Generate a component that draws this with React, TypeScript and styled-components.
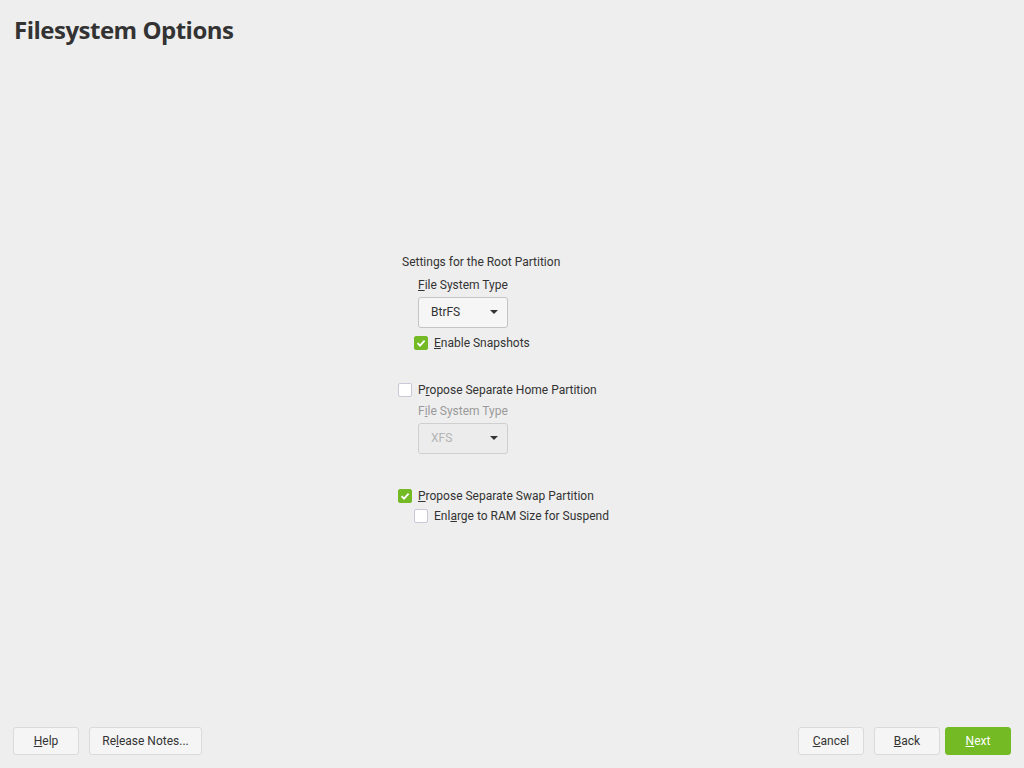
import styled, { createGlobalStyle } from "styled-components";

const GlobalStyle = createGlobalStyle`
  html, body {
    margin: 0;
    padding: 0;
    background: #eeeeee;
  }
  body {
    font-family: Roboto, "Liberation Sans", sans-serif;
    font-size: 12px;
    color: #333333;
  }
`

const Page = styled.div`
  width: 1024px;
  height: 768px;
  display: flex;
  flex-direction: column;
  background: #eeeeee;
  overflow: hidden;
`

const Header = styled.header`
  height: 52px;
  padding: 14px 0 0 14px;
  box-sizing: border-box;
`

const Title = styled.h1`
  margin: 0;
  font-family: "Open Sans", "DejaVu Sans", sans-serif;
  font-weight: 700;
  font-size: 24px;
  line-height: 32px;
  letter-spacing: -0.5px;
  color: #333333;
`

const Main = styled.main`
  flex: 1;
  display: flex;
  align-items: center;
  justify-content: center;
`

const Form = styled.div`
  width: 228px;
  display: flex;
  flex-direction: column;
`

const FrameTitle = styled.div`
  line-height: 16px;
  padding-left: 4px;
`

const Indent = styled.div<{ $top?: number }>`
  display: flex;
  flex-direction: column;
  align-items: flex-start;
  padding-left: 20px;
  margin-top: ${(p) => p.$top ?? 0}px;
`

const FieldLabel = styled.div<{ $disabled?: boolean; $top?: number }>`
  line-height: 16px;
  margin-top: ${(p) => p.$top ?? 0}px;
  color: ${(p) => (p.$disabled ? "#9a9a9a" : "#333333")};
`

const Combo = styled.div<{ $disabled?: boolean }>`
  width: 90px;
  height: 31px;
  margin-top: 4px;
  box-sizing: border-box;
  border: 1px solid ${(p) => (p.$disabled ? "#cfcfcf" : "#c4c4c4")};
  border-radius: 3px;
  background: ${(p) => (p.$disabled ? "#ececec" : "#f6f6f6")};
  display: flex;
  align-items: center;
  justify-content: space-between;
  padding: 0 9px 0 12px;
  color: ${(p) => (p.$disabled ? "#b4b4b4" : "#333333")};
`

const Caret = styled.span`
  width: 0;
  height: 0;
  border-left: 4px solid transparent;
  border-right: 4px solid transparent;
  border-top: 4px solid #333333;
`

const CheckRow = styled.div<{ $top?: number; $sub?: boolean }>`
  display: flex;
  align-items: center;
  height: 20px;
  gap: 6px;
  margin-top: ${(p) => p.$top ?? 0}px;
  margin-left: ${(p) => (p.$sub ? -4 : 0)}px;
`

const Box = styled.span<{ $checked?: boolean }>`
  width: 14px;
  height: 14px;
  box-sizing: border-box;
  border-radius: 2px;
  border: 1px solid ${(p) => (p.$checked ? "#73ba25" : "#c8c8d8")};
  background: ${(p) => (p.$checked ? "#73ba25" : "#ffffff")};
  display: flex;
  align-items: center;
  justify-content: center;
`

const Footer = styled.footer`
  display: flex;
  justify-content: space-between;
  align-items: flex-end;
  padding: 0 13px 13px 13px;
`

const ButtonGroup = styled.div`
  display: flex;
  gap: 10px;
`

const Button = styled.button<{ $primary?: boolean; $w?: number }>`
  height: 28px;
  min-width: ${(p) => p.$w ?? 66}px;
  padding: 0 8px;
  box-sizing: border-box;
  border-radius: 3px;
  border: 1px solid ${(p) => (p.$primary ? "#73ba25" : "#dadada")};
  background: ${(p) => (p.$primary ? "#73ba25" : "#f5f5f5")};
  color: ${(p) => (p.$primary ? "#ffffff" : "#333333")};
  font-family: Roboto, "Liberation Sans", sans-serif;
  font-size: 12px;
  margin-left: ${(p) => (p.$primary ? -5 : 0)}px;
`

const Check = () => (
  <svg width="10" height="10" viewBox="0 0 10 10">
    <path d="M1.5 5.2 L4 7.6 L8.6 2.6" fill="none" stroke="#ffffff" strokeWidth="1.8" />
  </svg>
)

export default function App() {
  return (
    <Page>
      <GlobalStyle />
      <Header>
        <Title>Filesystem Options</Title>
      </Header>
      <Main>
        <Form>
          <FrameTitle>Settings for the Root Partition</FrameTitle>
          <Indent $top={7}>
            <FieldLabel>
              <u>F</u>ile System Type
            </FieldLabel>
            <Combo>
              BtrFS
              <Caret />
            </Combo>
            <CheckRow $top={5} $sub>
              <Box $checked>
                <Check />
              </Box>
              <span>
                <u>E</u>nable Snapshots
              </span>
            </CheckRow>
          </Indent>
          <CheckRow $top={27}>
            <Box />
            <span>
              P<u>r</u>opose Separate Home Partition
            </span>
          </CheckRow>
          <Indent $top={3}>
            <FieldLabel $disabled>
              F<u>i</u>le System Type
            </FieldLabel>
            <Combo $disabled>
              XFS
              <Caret />
            </Combo>
          </Indent>
          <CheckRow $top={32}>
            <Box $checked>
              <Check />
            </Box>
            <span>
              <u>P</u>ropose Separate Swap Partition
            </span>
          </CheckRow>
          <Indent>
            <CheckRow $sub>
              <Box />
              <span>
                Enl<u>a</u>rge to RAM Size for Suspend
              </span>
            </CheckRow>
          </Indent>
        </Form>
      </Main>
      <Footer>
        <ButtonGroup>
          <Button>
            <u>H</u>elp
          </Button>
          <Button $w={113}>
            Re<u>l</u>ease Notes...
          </Button>
        </ButtonGroup>
        <ButtonGroup>
          <Button>
            <u>C</u>ancel
          </Button>
          <Button>
            <u>B</u>ack
          </Button>
          <Button $primary>
            <u>N</u>ext
          </Button>
        </ButtonGroup>
      </Footer>
    </Page>
  );
}
